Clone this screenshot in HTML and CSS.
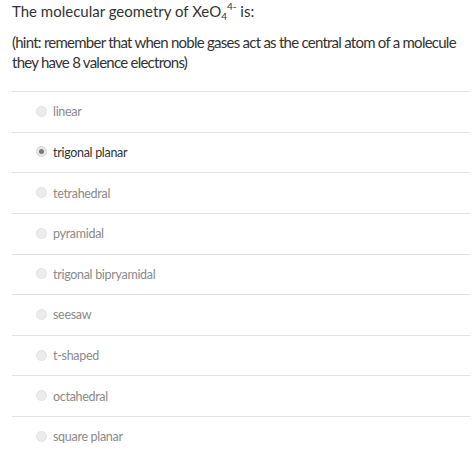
FILE: index.html
```html
<!DOCTYPE html>
<html>
<head>
<meta charset="utf-8">
<link rel="stylesheet" href="styles.css">
</head>
<body>
<div class="question">
  <p class="title">The molecular geometry of XeO<sub>4</sub><sup>4-</sup> is:</p>
  <p class="hint">(hint: remember that when noble gases act as the central atom of a molecule they have 8 valence electrons)</p>
  <ul class="options">
    <li class="option"><span class="radio"></span><span class="label">linear</span></li>
    <li class="option selected"><span class="radio"></span><span class="label">trigonal planar</span></li>
    <li class="option"><span class="radio"></span><span class="label">tetrahedral</span></li>
    <li class="option"><span class="radio"></span><span class="label">pyramidal</span></li>
    <li class="option"><span class="radio"></span><span class="label">trigonal bipryamidal</span></li>
    <li class="option"><span class="radio"></span><span class="label">seesaw</span></li>
    <li class="option"><span class="radio"></span><span class="label">t-shaped</span></li>
    <li class="option"><span class="radio"></span><span class="label">octahedral</span></li>
    <li class="option"><span class="radio"></span><span class="label">square planar</span></li>
  </ul>
</div>
</body>
</html>
```
FILE: styles.css
```css
html, body {
  margin: 0;
  padding: 0;
  background: #fff;
}
body {
  font-family: Lato, "Noto Sans", sans-serif;
  color: #333;
}
.question {
  padding: 0 4px 0 12px;
}
.title {
  margin: 0;
  font-size: 15px;
  line-height: 22px;
}
.title sub, .title sup {
  font-size: 10px;
  line-height: 0;
}
.title sub {
  vertical-align: -3px;
}
.title sup {
  vertical-align: 7px;
}
.hint {
  margin: 10px 0 0 0;
  font-size: 15px;
  letter-spacing: -0.75px;
  line-height: 20px;
}
.options {
  list-style: none;
  margin: 19px 0 0 0;
  padding: 0;
}
.option {
  box-sizing: border-box;
  height: 40.625px;
  border-top: 1px solid #e3e3e3;
  display: flex;
  align-items: center;
  gap: 6px;
  padding-left: 24px;
  font-size: 12.5px;
  letter-spacing: -0.3px;
  color: #8a8a8a;
}
.radio {
  box-sizing: border-box;
  width: 11px;
  height: 11px;
  border-radius: 50%;
  background: #ececec;
  border: 1px solid #e2e2e2;
  display: flex;
  align-items: center;
  justify-content: center;
  margin-top: -1px;
}
.selected {
  color: #333;
}
.selected .radio {
  background: #e6e6e6;
  border-color: #d8d8d8;
}
.selected .radio::after {
  content: "";
  width: 5px;
  height: 5px;
  border-radius: 50%;
  background: #7a7a7a;
}
```
